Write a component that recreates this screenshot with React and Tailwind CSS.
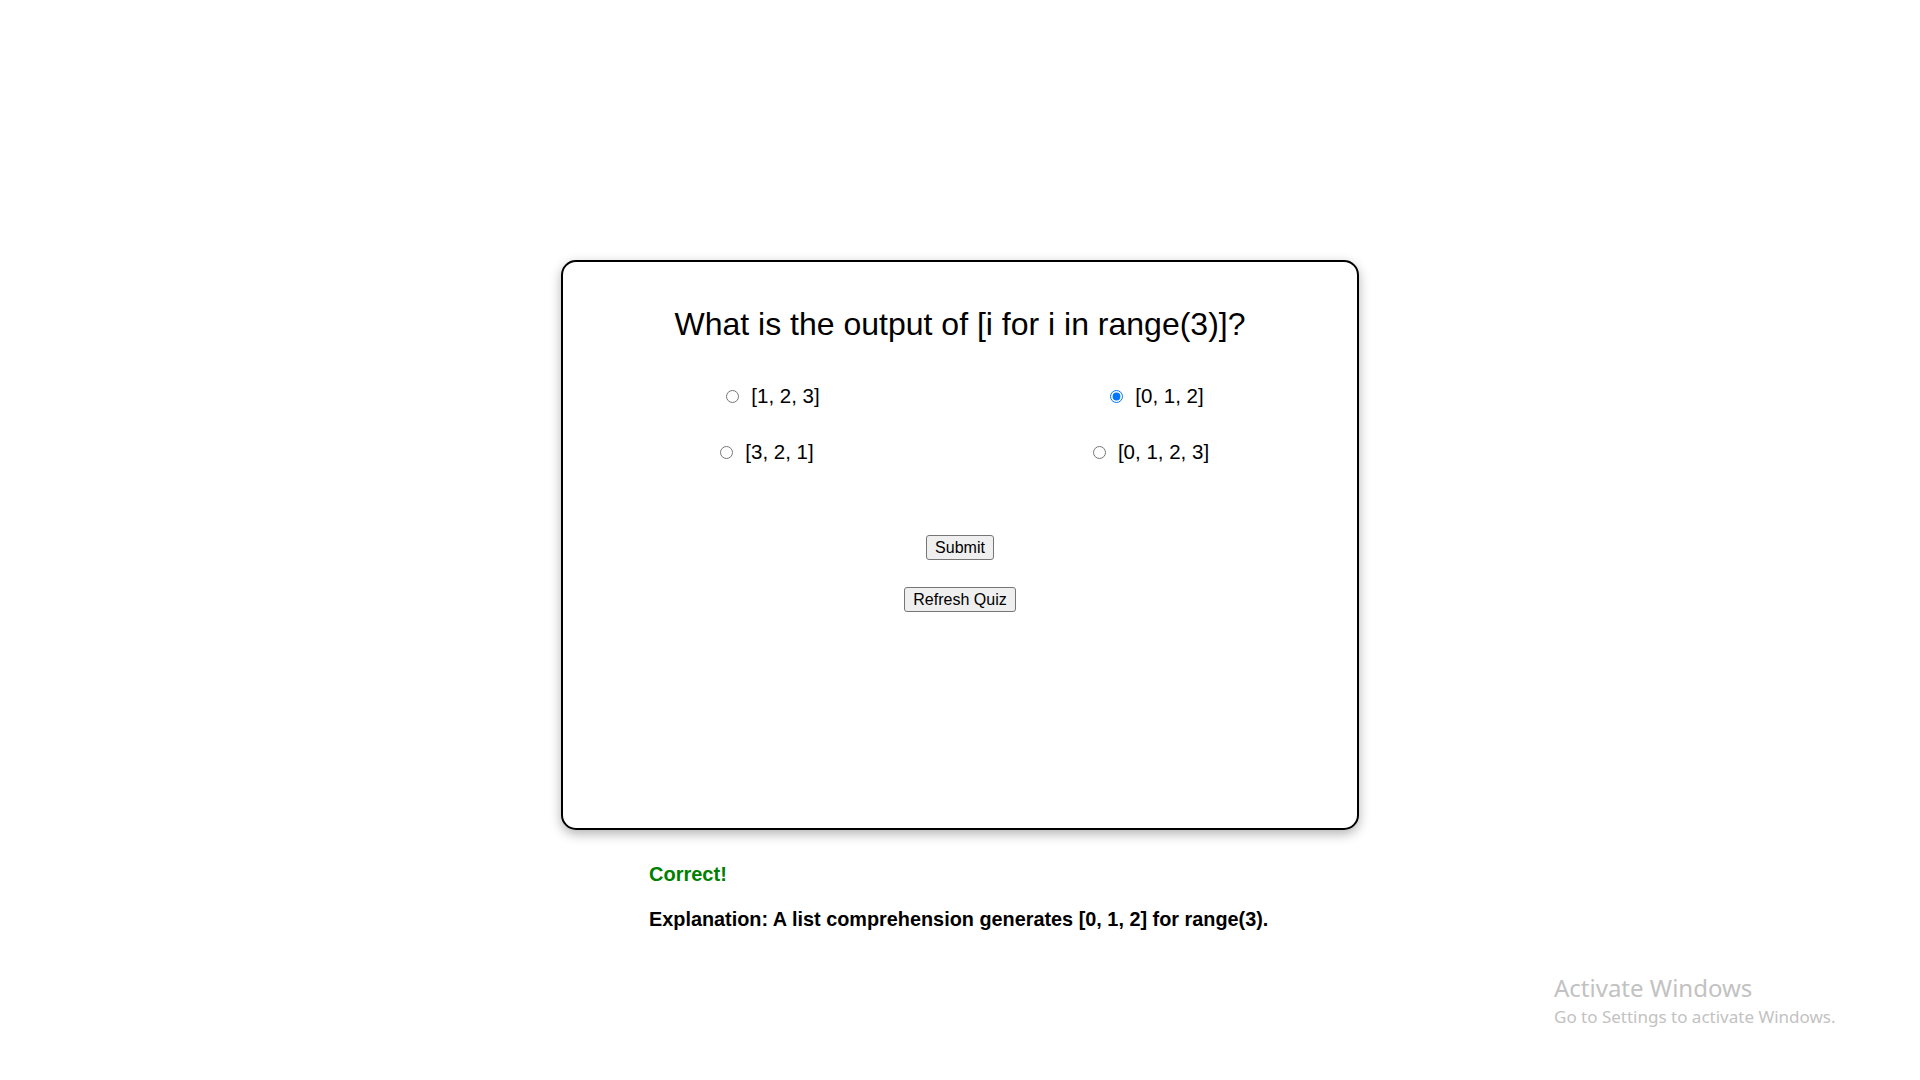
import { useState } from "react";

const options = [
  { id: "a", label: "[1, 2, 3]" },
  { id: "b", label: "[0, 1, 2]" },
  { id: "c", label: "[3, 2, 1]" },
  { id: "d", label: "[0, 1, 2, 3]" },
];

export default function App() {
  const [choice, setChoice] = useState("b");

  return (
    <div className="relative min-h-[1080px] bg-white pt-[260px] font-['Liberation_Sans',Arial,sans-serif] text-black">
      {/* Quiz card */}
      <div className="mx-auto flex h-[570px] w-[798px] flex-col items-center rounded-[15px] border-2 border-black bg-white pt-[44px] shadow-[0_4px_12px_rgba(0,0,0,0.3)]">
        <h2 className="text-[32px] leading-[37px]">What is the output of [i for i in range(3)]?</h2>

        <div className="mt-[41px] grid w-[768px] -translate-x-[1px] grid-cols-2 gap-y-[32px] text-[20.5px] leading-[24px]">
          {options.map((opt, i) => (
            <div key={opt.id} className="flex justify-center">
              <label className={`flex cursor-pointer items-center ${i < 2 ? "ml-3" : ""}`}>
                <input
                  type="radio"
                  name="answer"
                  checked={choice === opt.id}
                  onChange={() => setChoice(opt.id)}
                  className="mr-[12px] h-[13px] w-[13px]"
                />
                <span>{opt.label}</span>
              </label>
            </div>
          ))}
        </div>

        <button className="mt-[71px] rounded-[3px] border border-[#767676] bg-[#efefef] px-[8px] py-[2px] text-[16px] leading-[19px]">
          Submit
        </button>
        <button className="mt-[27px] rounded-[3px] border border-[#767676] bg-[#efefef] px-[8px] py-[2px] text-[16px] leading-[19px]">
          Refresh Quiz
        </button>
      </div>

      {/* Feedback */}
      <div className="mx-auto mt-[33px] w-[622px] text-[20px] font-bold leading-[23px]">
        <p className="text-[#008000]">Correct!</p>
        <p className="mt-[22px] whitespace-nowrap text-[19.85px]">Explanation: A list comprehension generates [0, 1, 2] for range(3).</p>
      </div>

      {/* Windows watermark */}
      <div className="pointer-events-none absolute left-[1554px] top-[973px] font-['Noto_Sans',sans-serif] text-[#c2c2c2]">
        <p className="text-[24px] leading-[30px]">Activate Windows</p>
        <p className="mt-[3px] text-[17px] leading-[22px]">Go to Settings to activate Windows.</p>
      </div>
    </div>
  );
}
